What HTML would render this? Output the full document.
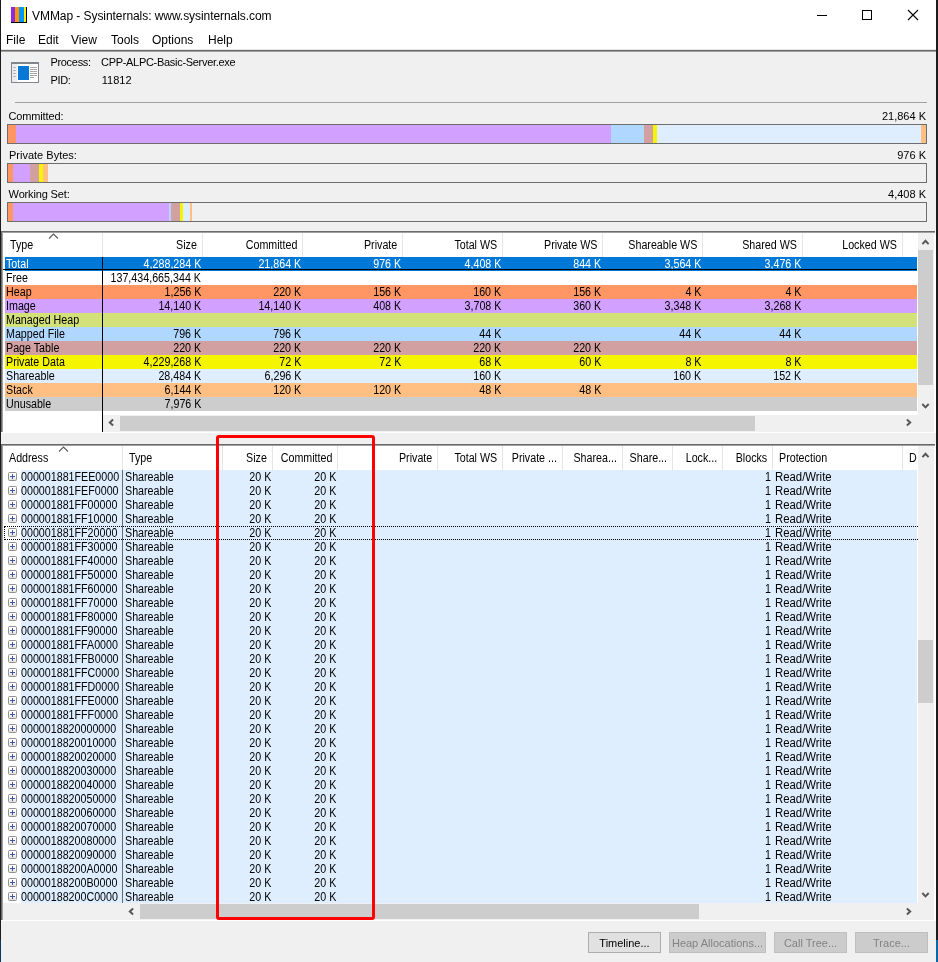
<!DOCTYPE html><html><head><meta charset="utf-8"><title>VMMap</title><style>
html,body{margin:0;padding:0}
body{width:938px;height:962px;position:relative;overflow:hidden;background:#f0f0f0;font-family:"Liberation Sans",sans-serif;font-size:11px;color:#000}
#w{position:absolute;left:0;top:0;width:938px;height:962px;will-change:transform}
.a{position:absolute}
.t{position:absolute;white-space:nowrap;line-height:14px;height:14px}
.r{text-align:right}
#title{left:1px;top:0;width:935px;height:50px;background:#fff}
.tt{font-size:12px}
.bar{position:absolute;left:7px;width:918px;height:18px;border:1px solid #6e6e6e;background:#f0f0f0}
.bar i{position:absolute;top:0;height:18px}
.list{position:absolute;background:#fff}
.hd{position:absolute;top:0;height:24px;border-right:1px solid #e5e5e5;box-sizing:border-box;background:#fff}
.hd span{position:absolute;top:5px;line-height:14px;white-space:nowrap;font-size:12.3px;transform:scaleX(.87);transform-origin:0 0}
.hd span.e{transform-origin:100% 0}
.row{position:absolute;left:0;height:14px}
.row span{position:absolute;top:0;line-height:14px;white-space:nowrap;font-size:12.3px;transform:scaleX(.87);transform-origin:0 0}
.row span.e{transform-origin:100% 0}
.btn{position:absolute;top:932px;height:19px;border:1px solid #adadad;background:#e1e1e1;text-align:center;line-height:21px;font-size:11px}
.dis{background:#ccc;border-color:#bfbfbf;color:#838383}
.pm{position:absolute;left:5px;top:2px;width:7px;height:7px;border:1px solid #919191;border-radius:1.5px;background:linear-gradient(#fff 40%,#dcdcdc)}
.pm:before{content:"";position:absolute;left:1px;top:3px;width:5px;height:1px;background:#3c55a5}
.pm:after{content:"";position:absolute;left:3px;top:1px;width:1px;height:5px;background:#3c55a5}
</style></head><body><div id="w">
<div class="a" style="left:0;top:0;width:1px;height:940px;background:#1c1c1c"></div>
<div class="a" style="left:0;top:940px;width:1px;height:22px;background:#0b3a5e"></div>
<div class="a" style="left:936px;top:0;width:2px;height:962px;background:#1c1c1c"></div>
<div class="a" style="left:936px;top:940px;width:2px;height:22px;background:#0767a8"></div>
<div class="a" id="title"></div>
<svg class="a" style="left:11px;top:7px" width="16" height="16" viewBox="0 0 16 16"><rect x="0" y="0" width="16" height="16" fill="#000"/><rect x="0" y="0" width="4" height="15" fill="#8a2be2"/><rect x="4" y="0" width="4" height="15" fill="#ff9500"/><rect x="8" y="0" width="5" height="15" fill="#0096ff"/><rect x="13" y="0" width="2" height="15" fill="#ffee00"/></svg>
<div class="t tt" style="left:32px;top:9px;letter-spacing:-.06px">VMMap - Sysinternals: www.sysinternals.com</div>
<svg class="a" style="left:800px;top:0" width="136" height="32" viewBox="0 0 136 32"><path d="M17 15.5H27" stroke="#000" stroke-width="1" fill="none"/><rect x="62.5" y="10.5" width="9" height="9" stroke="#000" stroke-width="1" fill="none"/><path d="M108 10L118 20M118 10L108 20" stroke="#000" stroke-width="1.1" fill="none"/></svg>
<div class="t tt" style="left:6px;top:33px">File</div>
<div class="t tt" style="left:38px;top:33px">Edit</div>
<div class="t tt" style="left:71px;top:33px">View</div>
<div class="t tt" style="left:111px;top:33px">Tools</div>
<div class="t tt" style="left:152px;top:33px">Options</div>
<div class="t tt" style="left:208px;top:33px">Help</div>
<div class="a" style="left:1px;top:49px;width:935px;height:1px;background:#e6e6e6"></div>
<div class="a" style="left:1px;top:50px;width:935px;height:1px;background:#696969"></div>
<div class="a" style="left:1px;top:51px;width:935px;height:1px;background:#a0a0a0"></div>
<svg class="a" style="left:11px;top:62px" width="28" height="21" viewBox="0 0 28 21"><rect x="0.5" y="0.5" width="27" height="20" fill="#fff" stroke="#80868b"/><rect x="0" y="0" width="28" height="2" fill="#80868b"/><rect x="1" y="2" width="5" height="18" fill="#ececec"/><path d="M2 5.5h3M2 8.5h3M2 11.5h3M2 14.5h3" stroke="#b8b8b8"/><rect x="7" y="4" width="11" height="14" fill="#0a78d7"/><path d="M19 5.5h7M19 7.5h7M19 9.5h7M19 11.5h7M19 13.5h7M19 15.5h4" stroke="#a6a6a6"/></svg>
<div class="t" style="left:50.4px;top:55px;letter-spacing:-.3px">Process:</div>
<div class="t" style="left:101px;top:55px;letter-spacing:-.3px">CPP-ALPC-Basic-Server.exe</div>
<div class="t" style="left:50.4px;top:73px;letter-spacing:-.3px">PID:</div>
<div class="t" style="left:101.8px;top:73px">11812</div>
<div class="a" style="left:15px;top:102px;width:912px;height:1px;background:#a0a0a0"></div>
<div class="t" style="left:8.4px;top:109px;letter-spacing:-.12px">Committed:</div><div class="t r" style="right:12px;top:109px">21,864 K</div>
<div class="bar" style="top:124px"><i style="left:0px;width:8px;background:#ff9664"></i><i style="left:8px;width:595px;background:#d2a0ff"></i><i style="left:603px;width:33px;background:#afd7ff"></i><i style="left:636px;width:9px;background:#d2a0a0"></i><i style="left:645px;width:4px;background:#f5f500"></i><i style="left:649px;width:264px;background:#deeeff"></i><i style="left:913px;width:5px;background:#ffbe82"></i></div>
<div class="t" style="left:9px;top:148px">Private Bytes:</div><div class="t r" style="right:12px;top:148px">976 K</div>
<div class="bar" style="top:163px"><i style="left:0px;width:5px;background:#ff9664"></i><i style="left:5px;width:17px;background:#d2a0ff"></i><i style="left:22px;width:9px;background:#d2a0a0"></i><i style="left:31px;width:4px;background:#f5f500"></i><i style="left:35px;width:5px;background:#ffbe82"></i></div>
<div class="t" style="left:8.6px;top:187px;letter-spacing:-.15px">Working Set:</div><div class="t r" style="right:12px;top:187px">4,408 K</div>
<div class="bar" style="top:202px"><i style="left:0px;width:5px;background:#ff9664"></i><i style="left:5px;width:156px;background:#d2a0ff"></i><i style="left:161px;width:2px;background:#afd7ff"></i><i style="left:163px;width:9px;background:#d2a0a0"></i><i style="left:172px;width:3px;background:#f5f500"></i><i style="left:175px;width:7px;background:#deeeff"></i><i style="left:182px;width:2px;background:#ffbe82"></i></div>
<div class="a" style="left:1px;top:231px;width:935px;height:201px;background:#fff;border-left:1px solid #696969;border-top:1px solid #696969;box-sizing:border-box"></div>
<div class="a" style="left:2px;top:232px;width:933px;height:200px;border-left:1px solid #a0a0a0;border-top:1px solid #a0a0a0;box-sizing:border-box;background:#fff"></div>
<div class="list" style="left:3px;top:233px;width:932px;height:199px"><div class="hd" style="left:0px;width:100px"><span style="left:7px">Type</span></div><div class="hd" style="left:100px;width:100px"><span class="e" style="right:5px">Size</span></div><div class="hd" style="left:200px;width:100px"><span class="e" style="right:5px">Committed</span></div><div class="hd" style="left:300px;width:100px"><span class="e" style="right:5px">Private</span></div><div class="hd" style="left:400px;width:100px"><span class="e" style="right:5px">Total WS</span></div><div class="hd" style="left:500px;width:100px"><span class="e" style="right:5px">Private WS</span></div><div class="hd" style="left:600px;width:100px"><span class="e" style="right:5px">Shareable WS</span></div><div class="hd" style="left:700px;width:100px"><span class="e" style="right:5px">Shared WS</span></div><div class="hd" style="left:800px;width:100px"><span class="e" style="right:5px">Locked WS</span></div><div class="hd" style="left:900px;width:14px;border-right:none"></div><svg class="a" style="left:45px;top:0" width="11" height="6" viewBox="0 0 11 6"><path d="M1 5.5L5.5 1L10 5.5" stroke="#5a5a5a" stroke-width="1.1" fill="none"/></svg><div class="row" style="top:24px;left:2px;width:912px;background:#0078d7;color:#fff"><span style="left:1px">Total</span><span class="e" style="right:716px">4,288,284 K</span><span class="e" style="right:616px">21,864 K</span><span class="e" style="right:516px">976 K</span><span class="e" style="right:416px">4,408 K</span><span class="e" style="right:316px">844 K</span><span class="e" style="right:216px">3,564 K</span><span class="e" style="right:116px">3,476 K</span></div><div class="row" style="top:38px;left:2px;width:912px;background:#ffffff;color:#000"><span style="left:1px">Free</span><span class="e" style="right:716px">137,434,665,344 K</span></div><div class="row" style="top:52px;left:2px;width:912px;background:#ff9664;color:#000"><span style="left:1px">Heap</span><span class="e" style="right:716px">1,256 K</span><span class="e" style="right:616px">220 K</span><span class="e" style="right:516px">156 K</span><span class="e" style="right:416px">160 K</span><span class="e" style="right:316px">156 K</span><span class="e" style="right:216px">4 K</span><span class="e" style="right:116px">4 K</span></div><div class="row" style="top:66px;left:2px;width:912px;background:#d2a0ff;color:#000"><span style="left:1px">Image</span><span class="e" style="right:716px">14,140 K</span><span class="e" style="right:616px">14,140 K</span><span class="e" style="right:516px">408 K</span><span class="e" style="right:416px">3,708 K</span><span class="e" style="right:316px">360 K</span><span class="e" style="right:216px">3,348 K</span><span class="e" style="right:116px">3,268 K</span></div><div class="row" style="top:80px;left:2px;width:912px;background:#d2e178;color:#000"><span style="left:1px">Managed Heap</span></div><div class="row" style="top:94px;left:2px;width:912px;background:#afd7ff;color:#000"><span style="left:1px">Mapped File</span><span class="e" style="right:716px">796 K</span><span class="e" style="right:616px">796 K</span><span class="e" style="right:416px">44 K</span><span class="e" style="right:216px">44 K</span><span class="e" style="right:116px">44 K</span></div><div class="row" style="top:108px;left:2px;width:912px;background:#d2a0a0;color:#000"><span style="left:1px">Page Table</span><span class="e" style="right:716px">220 K</span><span class="e" style="right:616px">220 K</span><span class="e" style="right:516px">220 K</span><span class="e" style="right:416px">220 K</span><span class="e" style="right:316px">220 K</span></div><div class="row" style="top:122px;left:2px;width:912px;background:#f5f500;color:#000"><span style="left:1px">Private Data</span><span class="e" style="right:716px">4,229,268 K</span><span class="e" style="right:616px">72 K</span><span class="e" style="right:516px">72 K</span><span class="e" style="right:416px">68 K</span><span class="e" style="right:316px">60 K</span><span class="e" style="right:216px">8 K</span><span class="e" style="right:116px">8 K</span></div><div class="row" style="top:136px;left:2px;width:912px;background:#deeeff;color:#000"><span style="left:1px">Shareable</span><span class="e" style="right:716px">28,484 K</span><span class="e" style="right:616px">6,296 K</span><span class="e" style="right:416px">160 K</span><span class="e" style="right:216px">160 K</span><span class="e" style="right:116px">152 K</span></div><div class="row" style="top:150px;left:2px;width:912px;background:#ffbe82;color:#000"><span style="left:1px">Stack</span><span class="e" style="right:716px">6,144 K</span><span class="e" style="right:616px">120 K</span><span class="e" style="right:516px">120 K</span><span class="e" style="right:416px">48 K</span><span class="e" style="right:316px">48 K</span></div><div class="row" style="top:164px;left:2px;width:912px;background:#cdcdcd;color:#000"><span style="left:1px">Unusable</span><span class="e" style="right:716px">7,976 K</span></div><div class="a" style="left:0;top:36px;width:914px;height:1px;background:#000"></div><div class="a" style="left:99px;top:24px;width:1px;height:175px;background:#000"></div><div class="a" style="left:915px;top:0;width:16px;height:182px;background:#f0f0f0"></div><div class="a" style="left:915px;top:17px;width:15px;height:135px;background:#cdcdcd"></div><svg class="a" style="left:914px;top:0" width="17" height="17" viewBox="0 0 17 17"><path d="M5.4 11.2L8.5 7.8L11.6 11.2" stroke="#585858" stroke-width="2" fill="none"/></svg><svg class="a" style="left:914px;top:164px" width="17" height="17" viewBox="0 0 17 17"><path d="M5.3 7L8.5 10.4L11.7 7" stroke="#585858" stroke-width="2" fill="none"/></svg><div class="a" style="left:100px;top:182px;width:831px;height:17px;background:#f0f0f0"></div><div class="a" style="left:117px;top:183px;width:635px;height:15px;background:#cdcdcd"></div><svg class="a" style="left:100px;top:181px" width="17" height="17" viewBox="0 0 17 17"><path d="M10.1 5.4L6.8 8.5L10.1 11.6" stroke="#585858" stroke-width="2" fill="none"/></svg><svg class="a" style="left:897px;top:181px" width="17" height="17" viewBox="0 0 17 17"><path d="M6.9 5.4L10.2 8.5L6.9 11.6" stroke="#585858" stroke-width="2" fill="none"/></svg></div>
<div class="a" style="left:1px;top:432px;width:935px;height:1px;background:#fff"></div>
<div class="a" style="left:1px;top:444px;width:935px;height:476px;background:#fff;border-left:1px solid #696969;border-top:1px solid #696969;box-sizing:border-box"></div>
<div class="a" style="left:2px;top:445px;width:933px;height:475px;border-left:1px solid #a0a0a0;border-top:1px solid #a0a0a0;box-sizing:border-box;background:#fff"></div>
<div class="list" style="left:3px;top:446px;width:932px;height:474px"><div class="hd" style="left:0px;width:120px"><span style="left:6px">Address</span></div><div class="hd" style="left:120px;width:100px"><span style="left:6px">Type</span></div><div class="hd" style="left:220px;width:50px"><span class="e" style="right:5px">Size</span></div><div class="hd" style="left:270px;width:65px"><span class="e" style="right:5px">Committed</span></div><div class="hd" style="left:335px;width:100px"><span class="e" style="right:5px">Private</span></div><div class="hd" style="left:435px;width:65px"><span class="e" style="right:5px">Total WS</span></div><div class="hd" style="left:500px;width:60px"><span class="e" style="right:5px">Private ...</span></div><div class="hd" style="left:560px;width:60px"><span class="e" style="right:5px">Sharea...</span></div><div class="hd" style="left:620px;width:50px"><span class="e" style="right:5px">Share...</span></div><div class="hd" style="left:670px;width:50px"><span class="e" style="right:5px">Lock...</span></div><div class="hd" style="left:720px;width:50px"><span class="e" style="right:5px">Blocks</span></div><div class="hd" style="left:770px;width:130px"><span style="left:6px">Protection</span></div><div class="hd" style="left:900px;width:14px;border-right:none"><span style="left:6px">D</span></div><svg class="a" style="left:55px;top:0" width="11" height="6" viewBox="0 0 11 6"><path d="M1 5.5L5.5 1L10 5.5" stroke="#5a5a5a" stroke-width="1.1" fill="none"/></svg><div class="row" style="top:24px;width:914px"><div class="a" style="left:18px;top:0;width:896px;height:14px;background:#deeeff"></div><i class="pm"></i><span style="left:18.4px">000001881FEE0000</span><span style="left:122px">Shareable</span><span class="e" style="right:646px">20 K</span><span class="e" style="right:581px">20 K</span><span class="e" style="right:146px">1</span><span style="left:772px;transform:scaleX(.924)">Read/Write</span></div><div class="row" style="top:38px;width:914px"><div class="a" style="left:18px;top:0;width:896px;height:14px;background:#deeeff"></div><i class="pm"></i><span style="left:18.4px">000001881FEF0000</span><span style="left:122px">Shareable</span><span class="e" style="right:646px">20 K</span><span class="e" style="right:581px">20 K</span><span class="e" style="right:146px">1</span><span style="left:772px;transform:scaleX(.924)">Read/Write</span></div><div class="row" style="top:52px;width:914px"><div class="a" style="left:18px;top:0;width:896px;height:14px;background:#deeeff"></div><i class="pm"></i><span style="left:18.4px">000001881FF00000</span><span style="left:122px">Shareable</span><span class="e" style="right:646px">20 K</span><span class="e" style="right:581px">20 K</span><span class="e" style="right:146px">1</span><span style="left:772px;transform:scaleX(.924)">Read/Write</span></div><div class="row" style="top:66px;width:914px"><div class="a" style="left:18px;top:0;width:896px;height:14px;background:#deeeff"></div><i class="pm"></i><span style="left:18.4px">000001881FF10000</span><span style="left:122px">Shareable</span><span class="e" style="right:646px">20 K</span><span class="e" style="right:581px">20 K</span><span class="e" style="right:146px">1</span><span style="left:772px;transform:scaleX(.924)">Read/Write</span></div><div class="row" style="top:80px;width:914px"><div class="a" style="left:18px;top:0;width:896px;height:14px;background:#deeeff"></div><i class="pm"></i><span style="left:18.4px">000001881FF20000</span><span style="left:122px">Shareable</span><span class="e" style="right:646px">20 K</span><span class="e" style="right:581px">20 K</span><span class="e" style="right:146px">1</span><span style="left:772px;transform:scaleX(.924)">Read/Write</span></div><div class="row" style="top:94px;width:914px"><div class="a" style="left:18px;top:0;width:896px;height:14px;background:#deeeff"></div><i class="pm"></i><span style="left:18.4px">000001881FF30000</span><span style="left:122px">Shareable</span><span class="e" style="right:646px">20 K</span><span class="e" style="right:581px">20 K</span><span class="e" style="right:146px">1</span><span style="left:772px;transform:scaleX(.924)">Read/Write</span></div><div class="row" style="top:108px;width:914px"><div class="a" style="left:18px;top:0;width:896px;height:14px;background:#deeeff"></div><i class="pm"></i><span style="left:18.4px">000001881FF40000</span><span style="left:122px">Shareable</span><span class="e" style="right:646px">20 K</span><span class="e" style="right:581px">20 K</span><span class="e" style="right:146px">1</span><span style="left:772px;transform:scaleX(.924)">Read/Write</span></div><div class="row" style="top:122px;width:914px"><div class="a" style="left:18px;top:0;width:896px;height:14px;background:#deeeff"></div><i class="pm"></i><span style="left:18.4px">000001881FF50000</span><span style="left:122px">Shareable</span><span class="e" style="right:646px">20 K</span><span class="e" style="right:581px">20 K</span><span class="e" style="right:146px">1</span><span style="left:772px;transform:scaleX(.924)">Read/Write</span></div><div class="row" style="top:136px;width:914px"><div class="a" style="left:18px;top:0;width:896px;height:14px;background:#deeeff"></div><i class="pm"></i><span style="left:18.4px">000001881FF60000</span><span style="left:122px">Shareable</span><span class="e" style="right:646px">20 K</span><span class="e" style="right:581px">20 K</span><span class="e" style="right:146px">1</span><span style="left:772px;transform:scaleX(.924)">Read/Write</span></div><div class="row" style="top:150px;width:914px"><div class="a" style="left:18px;top:0;width:896px;height:14px;background:#deeeff"></div><i class="pm"></i><span style="left:18.4px">000001881FF70000</span><span style="left:122px">Shareable</span><span class="e" style="right:646px">20 K</span><span class="e" style="right:581px">20 K</span><span class="e" style="right:146px">1</span><span style="left:772px;transform:scaleX(.924)">Read/Write</span></div><div class="row" style="top:164px;width:914px"><div class="a" style="left:18px;top:0;width:896px;height:14px;background:#deeeff"></div><i class="pm"></i><span style="left:18.4px">000001881FF80000</span><span style="left:122px">Shareable</span><span class="e" style="right:646px">20 K</span><span class="e" style="right:581px">20 K</span><span class="e" style="right:146px">1</span><span style="left:772px;transform:scaleX(.924)">Read/Write</span></div><div class="row" style="top:178px;width:914px"><div class="a" style="left:18px;top:0;width:896px;height:14px;background:#deeeff"></div><i class="pm"></i><span style="left:18.4px">000001881FF90000</span><span style="left:122px">Shareable</span><span class="e" style="right:646px">20 K</span><span class="e" style="right:581px">20 K</span><span class="e" style="right:146px">1</span><span style="left:772px;transform:scaleX(.924)">Read/Write</span></div><div class="row" style="top:192px;width:914px"><div class="a" style="left:18px;top:0;width:896px;height:14px;background:#deeeff"></div><i class="pm"></i><span style="left:18.4px">000001881FFA0000</span><span style="left:122px">Shareable</span><span class="e" style="right:646px">20 K</span><span class="e" style="right:581px">20 K</span><span class="e" style="right:146px">1</span><span style="left:772px;transform:scaleX(.924)">Read/Write</span></div><div class="row" style="top:206px;width:914px"><div class="a" style="left:18px;top:0;width:896px;height:14px;background:#deeeff"></div><i class="pm"></i><span style="left:18.4px">000001881FFB0000</span><span style="left:122px">Shareable</span><span class="e" style="right:646px">20 K</span><span class="e" style="right:581px">20 K</span><span class="e" style="right:146px">1</span><span style="left:772px;transform:scaleX(.924)">Read/Write</span></div><div class="row" style="top:220px;width:914px"><div class="a" style="left:18px;top:0;width:896px;height:14px;background:#deeeff"></div><i class="pm"></i><span style="left:18.4px">000001881FFC0000</span><span style="left:122px">Shareable</span><span class="e" style="right:646px">20 K</span><span class="e" style="right:581px">20 K</span><span class="e" style="right:146px">1</span><span style="left:772px;transform:scaleX(.924)">Read/Write</span></div><div class="row" style="top:234px;width:914px"><div class="a" style="left:18px;top:0;width:896px;height:14px;background:#deeeff"></div><i class="pm"></i><span style="left:18.4px">000001881FFD0000</span><span style="left:122px">Shareable</span><span class="e" style="right:646px">20 K</span><span class="e" style="right:581px">20 K</span><span class="e" style="right:146px">1</span><span style="left:772px;transform:scaleX(.924)">Read/Write</span></div><div class="row" style="top:248px;width:914px"><div class="a" style="left:18px;top:0;width:896px;height:14px;background:#deeeff"></div><i class="pm"></i><span style="left:18.4px">000001881FFE0000</span><span style="left:122px">Shareable</span><span class="e" style="right:646px">20 K</span><span class="e" style="right:581px">20 K</span><span class="e" style="right:146px">1</span><span style="left:772px;transform:scaleX(.924)">Read/Write</span></div><div class="row" style="top:262px;width:914px"><div class="a" style="left:18px;top:0;width:896px;height:14px;background:#deeeff"></div><i class="pm"></i><span style="left:18.4px">000001881FFF0000</span><span style="left:122px">Shareable</span><span class="e" style="right:646px">20 K</span><span class="e" style="right:581px">20 K</span><span class="e" style="right:146px">1</span><span style="left:772px;transform:scaleX(.924)">Read/Write</span></div><div class="row" style="top:276px;width:914px"><div class="a" style="left:18px;top:0;width:896px;height:14px;background:#deeeff"></div><i class="pm"></i><span style="left:18.4px">0000018820000000</span><span style="left:122px">Shareable</span><span class="e" style="right:646px">20 K</span><span class="e" style="right:581px">20 K</span><span class="e" style="right:146px">1</span><span style="left:772px;transform:scaleX(.924)">Read/Write</span></div><div class="row" style="top:290px;width:914px"><div class="a" style="left:18px;top:0;width:896px;height:14px;background:#deeeff"></div><i class="pm"></i><span style="left:18.4px">0000018820010000</span><span style="left:122px">Shareable</span><span class="e" style="right:646px">20 K</span><span class="e" style="right:581px">20 K</span><span class="e" style="right:146px">1</span><span style="left:772px;transform:scaleX(.924)">Read/Write</span></div><div class="row" style="top:304px;width:914px"><div class="a" style="left:18px;top:0;width:896px;height:14px;background:#deeeff"></div><i class="pm"></i><span style="left:18.4px">0000018820020000</span><span style="left:122px">Shareable</span><span class="e" style="right:646px">20 K</span><span class="e" style="right:581px">20 K</span><span class="e" style="right:146px">1</span><span style="left:772px;transform:scaleX(.924)">Read/Write</span></div><div class="row" style="top:318px;width:914px"><div class="a" style="left:18px;top:0;width:896px;height:14px;background:#deeeff"></div><i class="pm"></i><span style="left:18.4px">0000018820030000</span><span style="left:122px">Shareable</span><span class="e" style="right:646px">20 K</span><span class="e" style="right:581px">20 K</span><span class="e" style="right:146px">1</span><span style="left:772px;transform:scaleX(.924)">Read/Write</span></div><div class="row" style="top:332px;width:914px"><div class="a" style="left:18px;top:0;width:896px;height:14px;background:#deeeff"></div><i class="pm"></i><span style="left:18.4px">0000018820040000</span><span style="left:122px">Shareable</span><span class="e" style="right:646px">20 K</span><span class="e" style="right:581px">20 K</span><span class="e" style="right:146px">1</span><span style="left:772px;transform:scaleX(.924)">Read/Write</span></div><div class="row" style="top:346px;width:914px"><div class="a" style="left:18px;top:0;width:896px;height:14px;background:#deeeff"></div><i class="pm"></i><span style="left:18.4px">0000018820050000</span><span style="left:122px">Shareable</span><span class="e" style="right:646px">20 K</span><span class="e" style="right:581px">20 K</span><span class="e" style="right:146px">1</span><span style="left:772px;transform:scaleX(.924)">Read/Write</span></div><div class="row" style="top:360px;width:914px"><div class="a" style="left:18px;top:0;width:896px;height:14px;background:#deeeff"></div><i class="pm"></i><span style="left:18.4px">0000018820060000</span><span style="left:122px">Shareable</span><span class="e" style="right:646px">20 K</span><span class="e" style="right:581px">20 K</span><span class="e" style="right:146px">1</span><span style="left:772px;transform:scaleX(.924)">Read/Write</span></div><div class="row" style="top:374px;width:914px"><div class="a" style="left:18px;top:0;width:896px;height:14px;background:#deeeff"></div><i class="pm"></i><span style="left:18.4px">0000018820070000</span><span style="left:122px">Shareable</span><span class="e" style="right:646px">20 K</span><span class="e" style="right:581px">20 K</span><span class="e" style="right:146px">1</span><span style="left:772px;transform:scaleX(.924)">Read/Write</span></div><div class="row" style="top:388px;width:914px"><div class="a" style="left:18px;top:0;width:896px;height:14px;background:#deeeff"></div><i class="pm"></i><span style="left:18.4px">0000018820080000</span><span style="left:122px">Shareable</span><span class="e" style="right:646px">20 K</span><span class="e" style="right:581px">20 K</span><span class="e" style="right:146px">1</span><span style="left:772px;transform:scaleX(.924)">Read/Write</span></div><div class="row" style="top:402px;width:914px"><div class="a" style="left:18px;top:0;width:896px;height:14px;background:#deeeff"></div><i class="pm"></i><span style="left:18.4px">0000018820090000</span><span style="left:122px">Shareable</span><span class="e" style="right:646px">20 K</span><span class="e" style="right:581px">20 K</span><span class="e" style="right:146px">1</span><span style="left:772px;transform:scaleX(.924)">Read/Write</span></div><div class="row" style="top:416px;width:914px"><div class="a" style="left:18px;top:0;width:896px;height:14px;background:#deeeff"></div><i class="pm"></i><span style="left:18.4px">00000188200A0000</span><span style="left:122px">Shareable</span><span class="e" style="right:646px">20 K</span><span class="e" style="right:581px">20 K</span><span class="e" style="right:146px">1</span><span style="left:772px;transform:scaleX(.924)">Read/Write</span></div><div class="row" style="top:430px;width:914px"><div class="a" style="left:18px;top:0;width:896px;height:14px;background:#deeeff"></div><i class="pm"></i><span style="left:18.4px">00000188200B0000</span><span style="left:122px">Shareable</span><span class="e" style="right:646px">20 K</span><span class="e" style="right:581px">20 K</span><span class="e" style="right:146px">1</span><span style="left:772px;transform:scaleX(.924)">Read/Write</span></div><div class="row" style="top:444px;width:914px"><div class="a" style="left:18px;top:0;width:896px;height:14px;background:#deeeff"></div><i class="pm"></i><span style="left:18.4px">00000188200C0000</span><span style="left:122px">Shareable</span><span class="e" style="right:646px">20 K</span><span class="e" style="right:581px">20 K</span><span class="e" style="right:146px">1</span><span style="left:772px;transform:scaleX(.924)">Read/Write</span></div><div class="a" style="left:119px;top:24px;width:1px;height:433px;background:#696969"></div><div class="a" style="left:1px;top:80px;width:913px;height:12px;border-top:1px dotted #000;border-bottom:1px dotted #000;border-left:1px dotted #000"></div><div class="a" style="left:915px;top:0;width:16px;height:457px;background:#f0f0f0"></div><div class="a" style="left:915px;top:194px;width:15px;height:63px;background:#cdcdcd"></div><svg class="a" style="left:914px;top:0" width="17" height="17" viewBox="0 0 17 17"><path d="M5.4 11.2L8.5 7.8L11.6 11.2" stroke="#585858" stroke-width="2" fill="none"/></svg><svg class="a" style="left:914px;top:440px" width="17" height="17" viewBox="0 0 17 17"><path d="M5.3 7L8.5 10.4L11.7 7" stroke="#585858" stroke-width="2" fill="none"/></svg><div class="a" style="left:0;top:457px;width:931px;height:17px;background:#f0f0f0"></div><div class="a" style="left:137px;top:458px;width:559px;height:15px;background:#cdcdcd"></div><svg class="a" style="left:120px;top:457px" width="17" height="17" viewBox="0 0 17 17"><path d="M10.1 5.4L6.8 8.5L10.1 11.6" stroke="#585858" stroke-width="2" fill="none"/></svg><svg class="a" style="left:897px;top:457px" width="17" height="17" viewBox="0 0 17 17"><path d="M6.9 5.4L10.2 8.5L6.9 11.6" stroke="#585858" stroke-width="2" fill="none"/></svg></div>
<div class="a" style="left:1px;top:920px;width:935px;height:1px;background:#fff"></div>
<div class="a" style="left:935px;top:231px;width:1px;height:202px;background:#fff"></div>
<div class="a" style="left:935px;top:444px;width:1px;height:477px;background:#fff"></div>
<div class="a" style="left:216px;top:435px;width:153px;height:479px;border:3px solid #ff0000;border-radius:3px"></div>
<div class="btn" style="left:588px;width:71px">Timeline...</div>
<div class="btn dis" style="left:669px;width:95px">Heap Allocations...</div>
<div class="btn dis" style="left:774px;width:71px">Call Tree...</div>
<div class="btn dis" style="left:855px;width:71px">Trace...</div>
</div></body></html>
